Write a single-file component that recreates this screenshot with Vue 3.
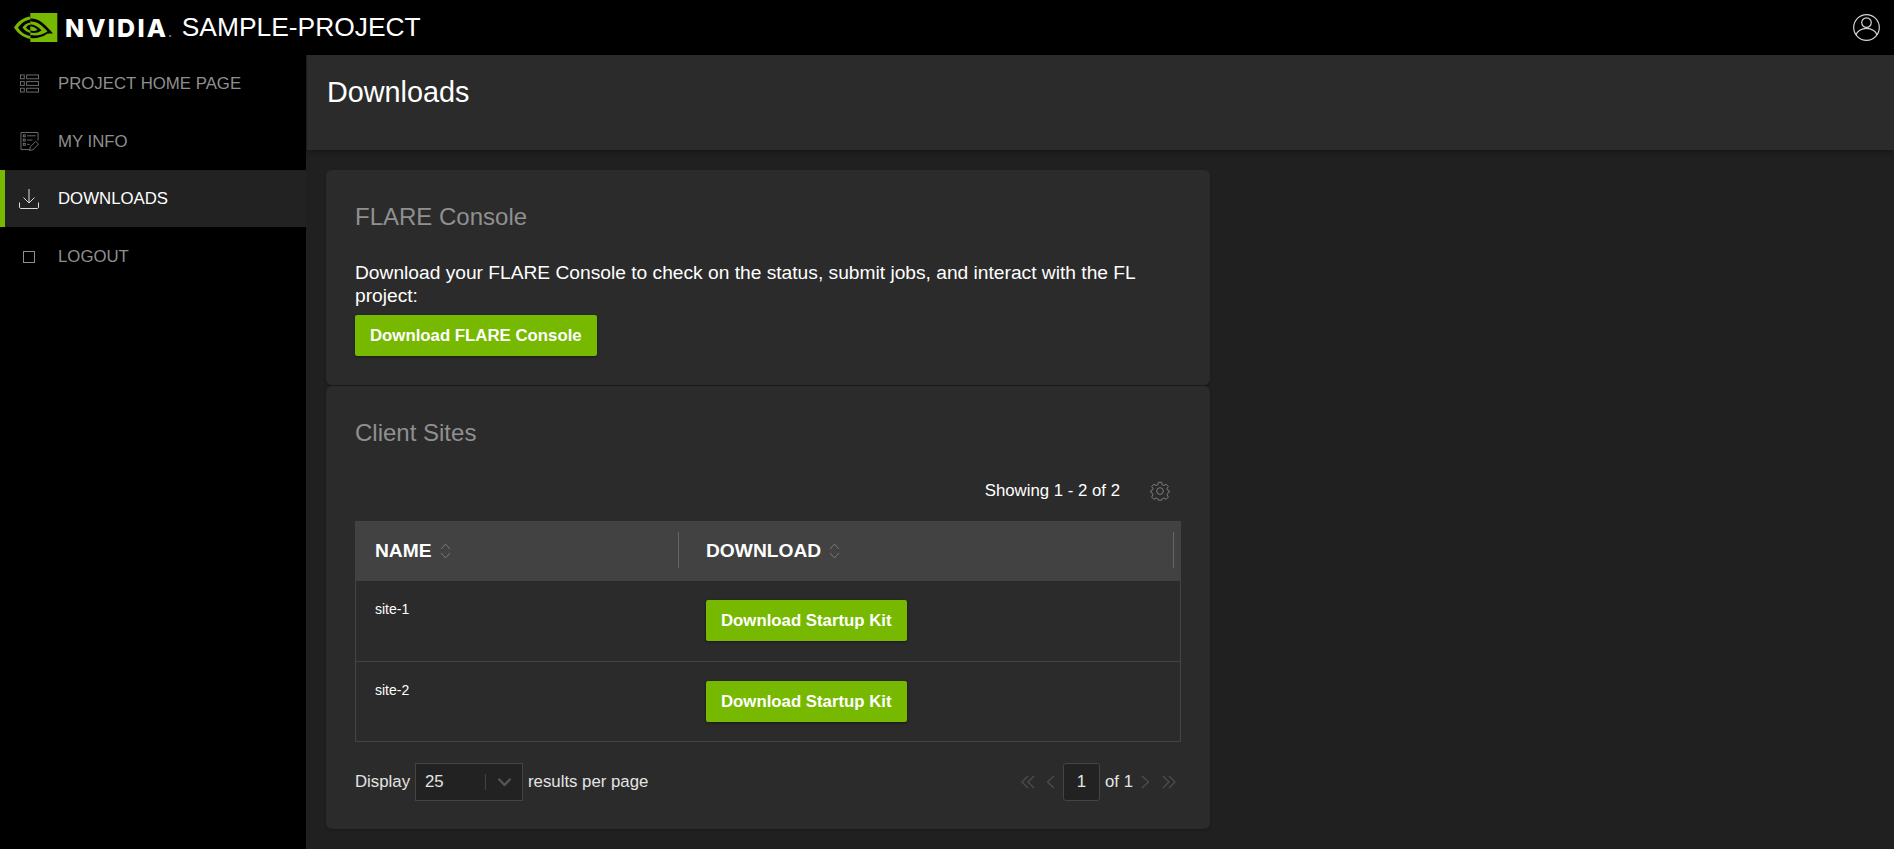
<script setup>
const navItems = [
  { label: 'Project Home Page', icon: 'list' },
  { label: 'My Info', icon: 'info' },
  { label: 'Downloads', icon: 'download', active: true },
  { label: 'Logout', icon: 'square' },
]
const sites = ['site-1', 'site-2']
</script>

<template>
  <div class="app">
    <header class="topbar">
      <div class="brand">
        <svg class="logo" viewBox="0 0 44 29" width="44" height="29">
          <rect class="logo-green" x="16.3" y="0" width="27" height="29" />
          <path class="logo-black" d="M16.3 5.5C24 5 30 10 39 20.5H33.5C28 24.5 22 25.6 16.3 25Z" />
          <path class="logo-green" d="M16.3 8.5C23 8 28 12 33.5 18.5C28 22.5 22 23 16.3 22V19.5C20 20.5 24 20 27.5 17.5C24 13.5 20 11 16.3 11.5Z" />
          <path class="logo-green" d="M16.3 13.5C19 13.2 21.5 14.5 23.5 17C21.5 18 19 18.3 16.3 17.5Z" />
          <path class="logo-green" d="M16.3 3.5C9 4.5 3.5 9 0 14.5C3.5 20 9 24.5 16.3 26V23C10.5 22 6.5 18.5 4 14.5C6.5 11 10.5 7.5 16.3 6.5Z" />
          <path class="logo-green" d="M16.3 9.5C12.5 10 10 12 8.5 14.5C10 17 12.5 19 16.3 20V17.5C14.5 17 13 16 12 14.5C13 13 14.5 12 16.3 11.8Z" />
        </svg>
        <span class="wordmark">NVIDIA<span class="wordmark-dot">.</span></span>
        <span class="project">SAMPLE-PROJECT</span>
      </div>
      <svg class="avatar" viewBox="0 0 27 27" width="27" height="27" fill="none" stroke="#d4d4d4" stroke-width="1.2">
        <circle cx="13.5" cy="13.5" r="12.8" />
        <circle cx="13.5" cy="8.6" r="4.8" />
        <path d="M3 21C4 17 8.5 14.4 13.5 14.4S23 17 24 21" />
      </svg>
    </header>

    <div class="body">
      <nav class="sidebar">
        <a v-for="item in navItems" :key="item.label" class="nav-item" :class="{ active: item.active }">
          <span class="nav-icon">
            <svg v-if="item.icon === 'list'" viewBox="0 0 20 20" width="19" height="19" fill="none" stroke="#6f6f6f">
              <rect x="0.5" y="1" width="4" height="4" />
              <rect x="7" y="1" width="12.5" height="4" />
              <rect x="0.5" y="8" width="4" height="4" />
              <rect x="7" y="8" width="12.5" height="4" />
              <rect x="0.5" y="15" width="4" height="4" />
              <rect x="7" y="15" width="12.5" height="4" />
            </svg>
            <svg v-else-if="item.icon === 'info'" viewBox="0 0 20 20" width="19" height="19" fill="none" stroke="#6f6f6f">
              <path d="M10 18.5H1V0.5H19V9" />
              <rect x="3.5" y="3" width="2" height="2" />
              <path d="M7.5 4H16.5" />
              <rect x="3.5" y="7.5" width="2" height="2" />
              <path d="M7.5 8.5H13" />
              <rect x="3.5" y="12" width="2" height="2" />
              <path d="M7.5 13H10" />
              <path d="M10 19.5L11 15.5L16.5 10L19.5 12.5L14 18.5Z" />
            </svg>
            <svg v-else-if="item.icon === 'download'" viewBox="0 0 20 20" width="20" height="20" fill="none" stroke="#ddd">
              <path d="M10 0V14" />
              <path d="M4.5 8.5L10 14L15.5 8.5" />
              <path d="M0.5 13.5V18C0.5 18.8 1 19.5 2 19.5H18C19 19.5 19.5 18.8 19.5 18V13.5" />
            </svg>
            <span v-else class="square-icon"></span>
          </span>
          <span>{{ item.label }}</span>
        </a>
      </nav>

      <main class="main">
        <div class="page-head">
          <h1>Downloads</h1>
        </div>
        <div class="content">
          <section class="card console-card">
            <h2>FLARE Console</h2>
            <p>Download your FLARE Console to check on the status, submit jobs, and interact with the FL project:</p>
            <button class="btn">Download FLARE Console</button>
          </section>

          <section class="card sites-card">
            <h2>Client Sites</h2>
            <div class="table-tools">
              <span>Showing 1 - 2 of 2</span>
              <svg class="gear" viewBox="0 0 24 24" width="20" height="20" fill="none" stroke="#7c7c7c" stroke-width="1.2" stroke-linejoin="round">
                <circle cx="12" cy="12" r="4" />
                <path d="M10 1.5H14L14.6 4.6L16.6 5.5L19.3 3.8L22 6.6L20.3 9.2L21.2 11L23 11.6V13.8L21.2 14.6L20.4 16.6L22 19.3L19.3 22L16.7 20.4L14.7 21.2L14 23H10L9.3 21.2L7.3 20.4L4.7 22L2 19.3L3.6 16.6L2.8 14.6L1 13.8V11.6L2.8 11L3.7 9.2L2 6.6L4.7 3.8L7.4 5.5L9.4 4.6Z" />
              </svg>
            </div>

            <div class="table">
              <div class="thead">
                <div class="th name-col">
                  <span>NAME</span>
                  <svg class="sort" viewBox="0 0 11 18" width="11" height="18" fill="none" stroke="#777"><path d="M1 7L5.5 2L10 7M1 11L5.5 16L10 11" /></svg>
                </div>
                <div class="th download-col">
                  <span>DOWNLOAD</span>
                  <svg class="sort" viewBox="0 0 11 18" width="11" height="18" fill="none" stroke="#777"><path d="M1 7L5.5 2L10 7M1 11L5.5 16L10 11" /></svg>
                </div>
              </div>
              <div v-for="site in sites" :key="site" class="tr">
                <div class="td name-col">{{ site }}</div>
                <div class="td download-col"><button class="btn">Download Startup Kit</button></div>
              </div>
            </div>

            <div class="pager">
              <div class="per-page">
                <span>Display</span>
                <div class="select">
                  <span class="select-value">25</span>
                  <span class="select-sep"></span>
                  <svg viewBox="0 0 16 10" width="15" height="10" fill="none" stroke="#555" stroke-width="2.4"><path d="M1.5 1.5L8 8L14.5 1.5" /></svg>
                </div>
                <span>results per page</span>
              </div>
              <div class="pages">
                <svg viewBox="0 0 14 14" width="14" height="14" fill="none" stroke="#4d4d4d" stroke-width="1.3"><path d="M7 1L1 7L7 13M13 1L7 7L13 13" /></svg>
                <svg class="chev-l" viewBox="0 0 9 14" width="9" height="14" fill="none" stroke="#4d4d4d" stroke-width="1.3"><path d="M8 1L1.5 7L8 13" /></svg>
                <span class="page-box">1</span>
                <span class="of">of 1</span>
                <svg class="chev-r" viewBox="0 0 9 14" width="9" height="14" fill="none" stroke="#4d4d4d" stroke-width="1.3"><path d="M1 1L7.5 7L1 13" /></svg>
                <svg viewBox="0 0 14 14" width="14" height="14" fill="none" stroke="#4d4d4d" stroke-width="1.3"><path d="M1 1L7 7L1 13M7 1L13 7L7 13" /></svg>
              </div>
            </div>
          </section>
        </div>
      </main>
    </div>
  </div>
</template>

<style>
html, body { margin: 0; background: #202020; overflow: hidden; }
</style>

<style scoped>
.app {
  width: 1894px;
  height: 849px;
  display: flex;
  flex-direction: column;
  background: #202020;
  color: #fff;
  font-family: "Liberation Sans", Arial, sans-serif;
  font-size: 16.8px;
  overflow: hidden;
}
.topbar {
  height: 55px;
  flex: none;
  background: #000;
  display: flex;
  align-items: center;
  justify-content: space-between;
  padding: 0 14px;
}
.brand { display: flex; align-items: center; }
.logo { display: block; }
.logo-green { fill: #76b900; }
.logo-black { fill: #000; }
.wordmark {
  font-family: Inter, "Liberation Sans", sans-serif;
  font-size: 25px;
  font-weight: 800;
  letter-spacing: 2.2px;
  margin-left: 7px;
  color: #fff;
}
.wordmark-dot { font-size: 10px; color: #aaa; letter-spacing: 0; }
.project { font-size: 26.4px; margin-left: 10px; }
.avatar { display: block; }
.body { flex: 1; display: flex; min-height: 0; }
.sidebar {
  width: 306px;
  flex: none;
  background: #000;
  margin-right: 1px;
}
.nav-item {
  height: 57px;
  display: flex;
  align-items: center;
  color: #8f8f8f;
  padding-left: 19px;
  gap: 19px;
  text-transform: uppercase;
}
.nav-item:nth-child(odd) { margin-bottom: 1px; }
.nav-item.active {
  background: #222;
  color: #fff;
  border-left: 5px solid #76b900;
  padding-left: 14px;
}
.nav-icon { width: 20px; height: 20px; display: flex; align-items: center; justify-content: center; }
.square-icon { width: 10px; height: 10px; border: 1.5px solid #8f8f8f; }
.main { flex: 1; min-width: 0; }
.page-head {
  height: 95px;
  background: #2b2b2b;
  box-shadow: 0 2px 6px rgba(0, 0, 0, .35);
  padding: 19px 20px 0;
  box-sizing: border-box;
}
h1 { margin: 0; font-size: 28.8px; font-weight: 400; line-height: 36px; }
.content { padding: 20px 19px; display: flex; flex-direction: column; gap: 1px; width: 884px; box-sizing: content-box; }
.card {
  background: #2b2b2b;
  border-radius: 6px;
  padding: 37px 29px 0;
  box-sizing: border-box;
  box-shadow: 0 1px 3px rgba(0, 0, 0, .2);
}
.console-card { height: 215px; }
.sites-card { height: 443px; }
h2 { margin: 0; font-size: 24px; font-weight: 400; color: #8f9091; line-height: 20px; }
p { margin: 34px 0 0; font-size: 19.2px; line-height: 23px; color: #fff; }
.btn {
  display: block;
  height: 41px;
  padding: 0 15px;
  background: #76b900;
  color: #fff;
  border: 0;
  border-radius: 2px;
  font: 700 16.8px "Liberation Sans", Arial, sans-serif;
  box-shadow: 0 1px 3px rgba(0, 0, 0, .4);
}
.console-card .btn { margin-top: 8px; }
.table-tools {
  display: flex;
  justify-content: flex-end;
  align-items: center;
  height: 30px;
  margin-top: 33px;
  padding-right: 11px;
  gap: 30px;
}
.table { margin-top: 15px; width: 826px; }
.thead { height: 60px; background: #424242; display: flex; }
.th {
  display: flex;
  align-items: center;
  gap: 8px;
  font-weight: 700;
  font-size: 19.2px;
  position: relative;
}
.name-col { width: 331px; padding-left: 20px; box-sizing: border-box; }
.download-col { flex: 1; padding-left: 20px; }
.th.name-col::after, .th.download-col::after {
  content: "";
  position: absolute;
  top: 11px;
  bottom: 13px;
  right: 7px;
  width: 1px;
  background: #666;
}
.tr {
  height: 81px;
  display: flex;
  box-sizing: border-box;
  border: 1px solid #444;
  border-top: 0;
}
.tr:last-child { height: 80px; }
.td { font-size: 14px; padding-top: 20px; }
.td.download-col { padding-top: 19px; }
.td.name-col { width: 330px; padding-left: 19px; }
.pager {
  margin-top: 21px;
  height: 38px;
  display: flex;
  justify-content: space-between;
  align-items: center;
  color: #e4e4e4;
}
.per-page { display: flex; align-items: center; gap: 5px; }
.select {
  width: 108px;
  height: 38px;
  box-sizing: border-box;
  background: #222;
  border: 1px solid #444;
  display: flex;
  align-items: center;
}
.select-value { width: 69px; padding-left: 9px; box-sizing: border-box; }
.select-sep { width: 1px; height: 16px; background: #444; margin-right: 11px; }
.pages { display: flex; align-items: center; margin-right: 5px; }
.chev-l { margin: 0 8px 0 11px; }
.chev-r { margin: 0 12px 0 8px; }
.page-box {
  width: 37px;
  height: 38px;
  box-sizing: border-box;
  background: #222;
  border: 1px solid #444;
  border-radius: 3px;
  display: flex;
  align-items: center;
  justify-content: center;
}
.of { margin-left: 5px; }
</style>
